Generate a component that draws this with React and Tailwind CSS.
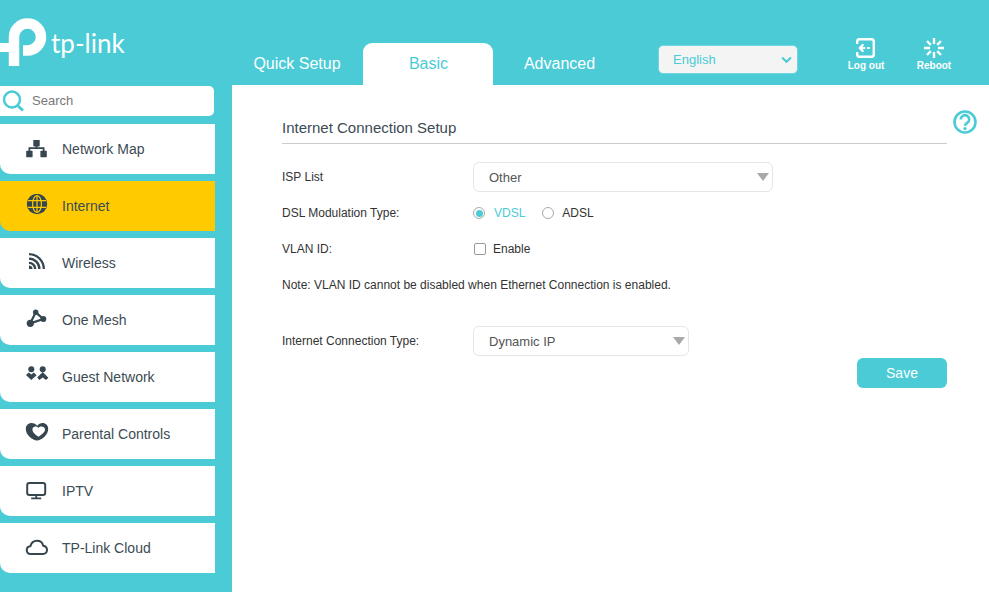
import React from 'react';

const Svg = ({ children, className = 'w-6 h-6' }) => (
    <svg viewBox="0 0 24 24" className={className}>{children}</svg>
);

const dark = '#36464f';

// Menu icons, all drawn in a 24x24 box
const NetworkIcon = () => (
    <Svg>
        <rect x="8.3" y="3" width="6.4" height="6.4" fill={dark} rx="0.6" />
        <rect x="1.2" y="13.8" width="6.4" height="6.4" fill={dark} rx="0.6" />
        <rect x="15.4" y="13.8" width="6.4" height="6.4" fill={dark} rx="0.6" />
        <path d="M4.4 15 V11.2 H18.6 V15 M11.5 8 V11.2" fill="none" stroke={dark} strokeWidth="1.8" />
    </Svg>
);

const GlobeIcon = () => (
    <Svg>
        <circle cx="12" cy="10" r="10.2" fill={dark} />
        <g fill="none" stroke="#ffcb00" strokeWidth="1.2">
            <ellipse cx="12" cy="10" rx="4.4" ry="8.4" />
            <path d="M12 1.5 V18.5 M3 6.6 H21 M3 13.4 H21" />
        </g>
    </Svg>
);

const WirelessIcon = () => (
    <Svg>
        <g fill="none" stroke={dark} strokeWidth="2.3">
            <path d="M4 3.2 A14.8 14.8 0 0 1 18.8 18" />
            <path d="M4 7.6 A10.4 10.4 0 0 1 14.4 18" />
            <path d="M4 11.8 A6.2 6.2 0 0 1 10.2 18" />
        </g>
        <path d="M4 14.5 A3.5 3.5 0 0 1 7.5 18 H4 Z" fill={dark} />
    </Svg>
);

const MeshIcon = () => (
    <Svg>
        <path d="M5.3 15.3 L10.7 4.3 L18.3 11 Z" fill="none" stroke={dark} strokeWidth="2.2" />
        <circle cx="5.3" cy="15.3" r="3.6" fill={dark} />
        <circle cx="10.7" cy="4.3" r="2.7" fill={dark} />
        <circle cx="18.3" cy="11" r="3" fill={dark} />
    </Svg>
);

const GuestIcon = () => (
    <Svg>
        <circle cx="6.3" cy="4.3" r="3" fill={dark} />
        <circle cx="17.7" cy="4.3" r="3" fill={dark} />
        <path d="M1 10 L3.8 7.6 L6.3 9.4 L8.8 7.6 L11.6 10.2 L6.3 15 Z" fill={dark} />
        <path d="M12.2 12.6 L17.7 7 L23.4 12.8 L21 15 L17.7 12.6 L14.4 15 Z" fill={dark} />
    </Svg>
);

const ParentalIcon = () => (
    <Svg>
        <path d="M12 18.6 C7 18 0.8 13 0.8 6.8 C0.8 3.2 3.6 1 6.4 1 C9 1 11 2.2 12.2 3.8 C13.4 2.2 15.4 1 17.6 1 C20.6 1 23.2 3.2 23.2 6.8 C23.2 13 17 18 12 18.6 Z" fill={dark} />
        <path d="M13.4 14.8 C9.8 12.2 7.4 10 7.4 7.4 C7.4 4.6 11.4 3.2 13.4 6 C15.4 3.2 20 4.6 20 7.4 C20 10 17 12.2 13.4 14.8 Z" fill="#fff" />
    </Svg>
);

const MonitorIcon = () => (
    <Svg>
        <rect x="2.2" y="4" width="18" height="12" rx="2.2" fill="none" stroke={dark} strokeWidth="2" />
        <path d="M11.2 16 V19 M6.2 19.3 H16.2" fill="none" stroke={dark} strokeWidth="1.8" />
    </Svg>
);

const CloudIcon = () => (
    <Svg>
        <path d="M6 18 C3.2 18 1.8 16.2 1.8 14.2 C1.8 12 3.4 10.4 5.4 10.3 C6.2 7 9 4.8 12 4.8 C15.4 4.8 17.6 7 18.2 9.8 C20.6 10.2 22 12 22 14 C22 16.2 20.4 18 18 18 Z" fill="none" stroke={dark} strokeWidth="2" strokeLinejoin="round" />
    </Svg>
);

const Logo = () => (
    <svg viewBox="0 0 50 60" className="w-[50px] h-[60px] shrink-0">
        <path d="M14 54 V25 A13.5 13.5 0 1 1 27.5 38.5 H23" fill="none" stroke="#fff" strokeWidth="10.5" />
        <path d="M0 31 H14 V40 H0 Z" fill="#fff" />
    </svg>
);

const menuItems = [
    { label: 'Network Map', icon: NetworkIcon },
    { label: 'Internet', icon: GlobeIcon, active: true },
    { label: 'Wireless', icon: WirelessIcon },
    { label: 'One Mesh', icon: MeshIcon },
    { label: 'Guest Network', icon: GuestIcon },
    { label: 'Parental Controls', icon: ParentalIcon },
    { label: 'IPTV', icon: MonitorIcon },
    { label: 'TP-Link Cloud', icon: CloudIcon },
];

const FakeSelect = ({ value, className }) => (
    <div className={`h-[30px] flex items-center justify-between pl-[15px] pr-[3px] border border-[#e6e6e6] rounded-[6px] bg-white text-[13px] text-[#555] ${className}`}>
        <span className="mt-[1px]">{value}</span>
        <svg viewBox="0 0 12 8" className="w-3 h-2">
            <path d="M0 0 H12 L6 8 Z" fill="#a9a9a9" />
        </svg>
    </div>
);

const Row = ({ label, children }) => (
    <div className="flex items-center h-[30px] text-[12px] text-[#333]">
        <div className="w-[191px] -mt-[1px]">{label}</div>
        {children}
    </div>
);

const Radio = ({ checked }) => (
    <span className="w-3 h-3 rounded-full border border-[#aaa] flex items-center justify-center">
        {checked && <span className="w-[7px] h-[7px] rounded-full bg-[#4acbd6]" />}
    </span>
);

export default function App() {
    return (
        <div className="w-[989px] h-[592px] overflow-hidden bg-[#4acbd6] font-['Liberation_Sans',Arial,sans-serif]">
            {/* Top bar */}
            <header className="h-[85px] flex">
                <div className="w-[232px] pt-[12px] flex items-start">
                    <Logo />
                    <span className="ml-[1px] mt-[15px] text-[26px] leading-[32px] text-white font-['Lato',sans-serif] font-normal">tp-link</span>
                </div>
                <nav className="mt-[43px] flex gap-[1px] text-[16px]">
                    <div className="w-[130px] h-[42px] flex items-center justify-center text-white">Quick Setup</div>
                    <div className="w-[130px] h-[42px] flex items-center justify-center pl-[1px] bg-white rounded-t-[9px] text-[#4acbd6]">Basic</div>
                    <div className="w-[131px] h-[42px] flex items-center justify-center text-white">Advanced</div>
                </nav>
                <div className="ml-[33px] mt-[45px] w-[140px] h-[29px] flex items-center justify-between pl-[14px] pr-[5px] bg-[#f4f4f4] rounded-[5px] border border-[#6fd5de] text-[13px] text-[#4acbd6]">
                    <span className="mt-[1px]">English</span>
                    <svg viewBox="0 0 12 8" className="w-[11px] h-2">
                        <path d="M1.2 1.2 L6 6 L10.8 1.2" fill="none" stroke="#4acbd6" strokeWidth="2.2" />
                    </svg>
                </div>
                <div className="ml-[34px] mt-[38px] w-[68px] flex flex-col items-center text-[10px] font-bold text-white">
                    <svg viewBox="0 0 20 20" className="w-5 h-5">
                        <path d="M1.2 6 V3.5 A2.3 2.3 0 0 1 3.5 1.2 H15.5 A2.3 2.3 0 0 1 17.8 3.5 V16.5 A2.3 2.3 0 0 1 15.5 18.8 H3.5 A2.3 2.3 0 0 1 1.2 16.5 V14" fill="none" stroke="#fff" strokeWidth="2.4" />
                        <path d="M7.4 6.2 L3.8 10 L7.4 13.8 M5.5 10 H9.2 M11 10 H13.8" fill="none" stroke="#fff" strokeWidth="2.2" />
                    </svg>
                    <span className="mt-[1px] leading-[14px]">Log out</span>
                </div>
                <div className="mt-[38px] w-[68px] flex flex-col items-center text-[10px] font-bold text-white">
                    <svg viewBox="0 0 20 20" className="w-5 h-5">
                        <path d="M10 0 V6 M10 14 V20 M0 10 H6 M14 10 H20 M3 3 L6.8 6.8 M13.2 13.2 L17 17 M17 3 L13.2 6.8 M6.8 13.2 L3 17" fill="none" stroke="#fff" strokeWidth="2.4" />
                    </svg>
                    <span className="mt-[1px] leading-[14px]">Reboot</span>
                </div>
            </header>

            <div className="flex h-[507px]">
                {/* Sidebar */}
                <aside className="w-[232px] pt-[1px]">
                    <div className="w-[214px] h-[30px] flex items-center bg-white rounded-r-[5px]">
                        <svg viewBox="0 0 24 24" className="w-6 h-6 ml-[1px] shrink-0">
                            <circle cx="11" cy="10.5" r="8" fill="none" stroke="#4acbd6" strokeWidth="2.5" />
                            <path d="M16.5 16.5 L22 21.5" fill="none" stroke="#4acbd6" strokeWidth="3" />
                        </svg>
                        <span className="ml-[7px] text-[13px] text-[#777]">Search</span>
                    </div>
                    <ul className="mt-[8px] flex flex-col gap-[7px]">
                        {menuItems.map((item) => {
                            const Icon = item.icon;
                            return (
                                <li
                                    key={item.label}
                                    className={`w-[215px] h-[50px] flex items-center pl-[25px] rounded-bl-[10px] text-[14px] text-[#3c4b54] ${item.active ? 'bg-[#ffcb00]' : 'bg-white'}`}
                                >
                                    <Icon />
                                    <span className="ml-[13px]">{item.label}</span>
                                </li>
                            );
                        })}
                    </ul>
                </aside>

                {/* Content */}
                <main className="flex-1 flex bg-white pl-[50px]">
                    <div className="w-[665px] pt-[33px]">
                        <h1 className="h-[26px] border-b border-[#ccc] text-[15px] leading-[20px] font-normal text-[#3c4b54]">Internet Connection Setup</h1>
                        <div className="mt-[18px] flex flex-col gap-[6px]">
                            <Row label="ISP List">
                                <FakeSelect value="Other" className="w-[300px]" />
                            </Row>
                            <Row label="DSL Modulation Type:">
                                <label className="flex items-center gap-[9px] text-[#4acbd6]">
                                    <Radio checked />
                                    VDSL
                                </label>
                                <label className="flex items-center gap-[8px] ml-[17px]">
                                    <Radio />
                                    ADSL
                                </label>
                            </Row>
                            <Row label="VLAN ID:">
                                <label className="flex items-center gap-[7px] ml-[1px]">
                                    <span className="w-3 h-3 rounded-[2px] border border-[#999] bg-white" />
                                    Enable
                                </label>
                            </Row>
                            <p className="h-[30px] flex items-center text-[12px] text-[#333]">Note: VLAN ID cannot be disabled when Ethernet Connection is enabled.</p>
                        </div>
                        <div className="mt-[26px]">
                            <Row label="Internet Connection Type:">
                                <FakeSelect value="Dynamic IP" className="w-[216px]" />
                            </Row>
                        </div>
                        <div className="mt-[2px] flex justify-end">
                            <button className="w-[90px] h-[30px] rounded-[6px] bg-[#4acbd6] text-[14px] text-white">Save</button>
                        </div>
                    </div>
                    <svg viewBox="0 0 24 24" className="w-6 h-6 ml-[6px] mt-[25px] shrink-0">
                        <circle cx="12" cy="12" r="10.5" fill="none" stroke="#4acbd6" strokeWidth="2.6" />
                        <path d="M7.8 9.5 A4.2 4.2 0 1 1 14.2 13 C12.8 13.8 12 14.4 12 15.8" fill="none" stroke="#4acbd6" strokeWidth="2.6" />
                        <circle cx="12" cy="18.6" r="1.6" fill="#4acbd6" />
                    </svg>
                </main>
            </div>
        </div>
    );
}
